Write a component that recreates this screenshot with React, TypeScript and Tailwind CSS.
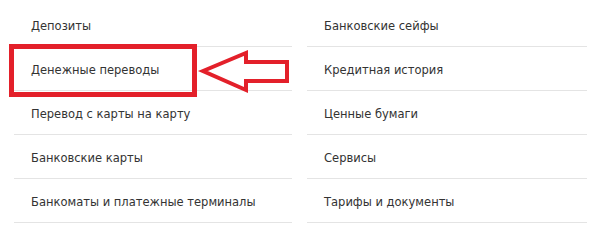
const left = [
  'Депозиты',
  'Денежные переводы',
  'Перевод с карты на карту',
  'Банковские карты',
  'Банкоматы и платежные терминалы',
]

const right = [
  'Банковские сейфы',
  'Кредитная история',
  'Ценные бумаги',
  'Сервисы',
  'Тарифы и документы',
]

function Column({ items }: { items: string[] }) {
  return (
    <ul className="flex flex-col">
      {items.map((item) => (
        <li
          key={item}
          className="flex h-[44px] items-center whitespace-nowrap border-b border-[#e4e4e4] px-[17px] pt-[3px]"
        >
          {item}
        </li>
      ))}
    </ul>
  )
}

export default function App() {
  return (
    <div
      className="relative h-[238px] w-[600px] overflow-hidden bg-white text-[12.8px] text-[#333]"
      style={{ fontFamily: '"DejaVu Sans Condensed", "DejaVu Sans", sans-serif' }}
    >
      <div className="grid grid-cols-[278px_280px] gap-x-[15px] pl-[14px] pt-[3px]">
        <Column items={left} />
        <Column items={right} />
      </div>

      {/* red annotation box */}
      <div className="absolute left-[9px] top-[44px] h-[53px] w-[188px] border-[5px] border-[#e3202a]" />

      {/* arrow pointing left */}
      <svg className="absolute left-0 top-0" width="600" height="238">
        <polygon
          points="203,71 246,53 246,62 287,62 287,81 246,81 246,90"
          fill="white"
          stroke="#e3202a"
          strokeWidth="4"
          strokeLinejoin="miter"
        />
      </svg>
    </div>
  )
}
